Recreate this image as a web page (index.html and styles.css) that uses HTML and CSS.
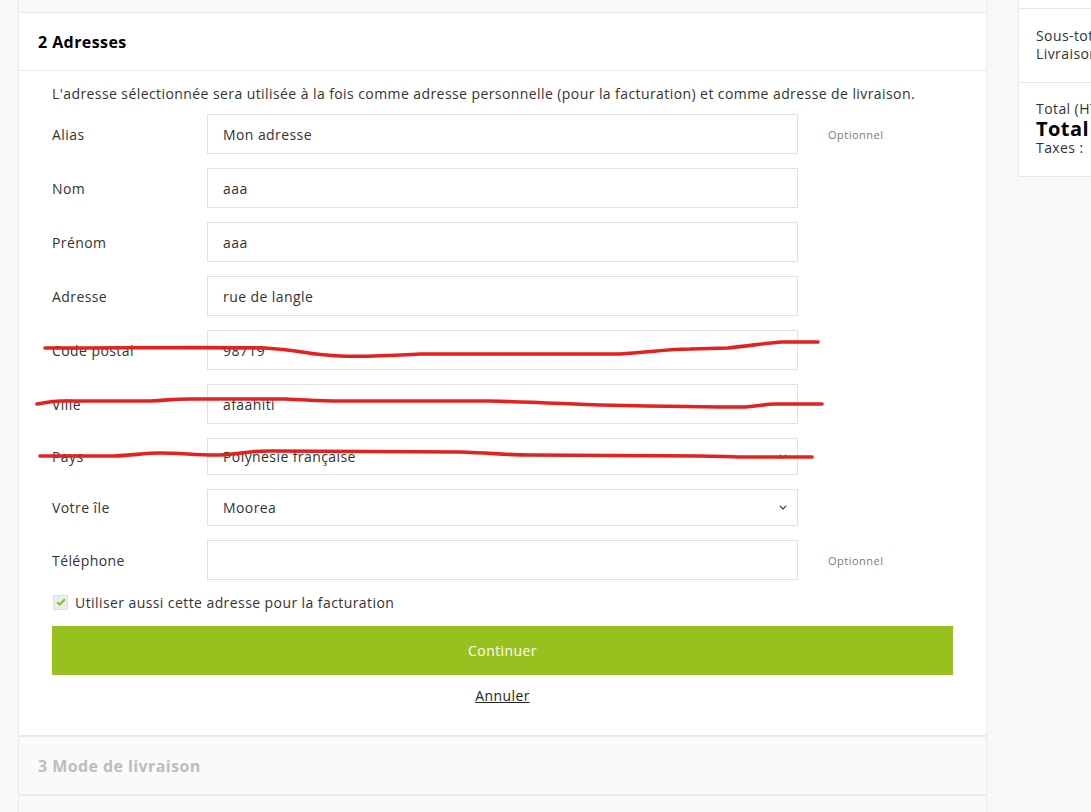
FILE: index.html
```html
<!DOCTYPE html>
<html lang="fr">
<head>
<meta charset="utf-8">
<title>Commande - Adresses</title>
<link rel="stylesheet" href="styles.css">
</head>
<body>
<div class="page">
  <div class="main">
    <section class="step step-done"></section>

    <section class="step step-current">
      <h1 class="step-title">2 Adresses</h1>
      <div class="step-body">
        <p class="intro">L'adresse sélectionnée sera utilisée à la fois comme adresse personnelle (pour la facturation) et comme adresse de livraison.</p>
        <form class="form">
          <div class="row">
            <label class="label">Alias</label>
            <input class="field" type="text" value="Mon adresse">
            <span class="opt">Optionnel</span>
          </div>
          <div class="row">
            <label class="label">Nom</label>
            <input class="field" type="text" value="aaa">
            <span class="opt"></span>
          </div>
          <div class="row">
            <label class="label">Prénom</label>
            <input class="field" type="text" value="aaa">
            <span class="opt"></span>
          </div>
          <div class="row">
            <label class="label">Adresse</label>
            <input class="field" type="text" value="rue de langle">
            <span class="opt"></span>
          </div>
          <div class="row">
            <label class="label">Code postal</label>
            <input class="field" type="text" value="98719">
            <span class="opt"></span>
          </div>
          <div class="row">
            <label class="label">Ville</label>
            <input class="field" type="text" value="afaahiti">
            <span class="opt"></span>
          </div>
          <div class="row">
            <label class="label">Pays</label>
            <div class="select-wrap">
              <select class="field select"><option>Polynésie française</option></select>
              <svg class="chev" width="8" height="5" viewBox="0 0 8 5"><path d="M0.8 0.8 L4 4 L7.2 0.8" fill="none" stroke="#555" stroke-width="1.3"/></svg>
            </div>
            <span class="opt"></span>
          </div>
          <div class="row">
            <label class="label">Votre île</label>
            <div class="select-wrap">
              <select class="field select"><option>Moorea</option></select>
              <svg class="chev" width="8" height="5" viewBox="0 0 8 5"><path d="M0.8 0.8 L4 4 L7.2 0.8" fill="none" stroke="#555" stroke-width="1.3"/></svg>
            </div>
            <span class="opt"></span>
          </div>
          <div class="row">
            <label class="label">Téléphone</label>
            <input class="field" type="text" value="">
            <span class="opt">Optionnel</span>
          </div>
          <div class="check-row">
            <span class="checkbox">
              <svg width="10" height="8" viewBox="0 0 10 8"><path d="M1.2 4.2 L3.8 6.6 L8.8 1.2" fill="none" stroke="#82bd2c" stroke-width="2"/></svg>
            </span>
            <span class="check-label">Utiliser aussi cette adresse pour la facturation</span>
          </div>
          <button class="btn" type="button">Continuer</button>
          <div class="cancel"><a href="#">Annuler</a></div>
        </form>
      </div>
    </section>

    <section class="step step-next">
      <h2 class="step-title muted">3 Mode de livraison</h2>
    </section>
    <section class="step step-next last"></section>
  </div>

  <aside class="aside">
    <div class="aside-top"></div>
    <div class="aside-block">
      <div class="line">Sous-total</div>
      <div class="line">Livraison</div>
    </div>
    <div class="aside-block totals">
      <div class="line">Total (HT)</div>
      <div class="line big">Total</div>
      <div class="line small">Taxes :</div>
    </div>
  </aside>
</div>

<svg class="scribbles" width="1091" height="812" viewBox="0 0 1091 812">
  <path d="M45 348 C120 348 200 347 265 348 C300 350 310 355 340 356 C370 357 400 355 420 354 L620 354 C650 352 670 349 690 349 L728 348 C750 346 765 343 782 342 L818 342" />
  <path d="M37 404 C45 403 50 401 60 401 L150 401 C170 400 175 399 190 399 L285 399 C310 400 320 401 340 401 L490 401 C530 402 570 404 600 405 C650 406 700 407 745 407 C760 406 765 404 775 404 L822 404" />
  <path d="M40 456 L115 456 C135 455 145 453 160 453 C180 453 195 455 215 455 C235 455 245 451 270 451 L460 452 C490 453 510 455 530 455 L700 456 C720 456 730 457 750 457 L812 457" />
</svg>
</body>
</html>
```
FILE: styles.css
```css
* { box-sizing: border-box; }
html, body {
  margin: 0;
  padding: 0;
}
body {
  width: 1091px;
  height: 812px;
  overflow: hidden;
  background: #f8f8f8;
  font-family: "Open Sans", "DejaVu Sans", sans-serif;
  font-size: 14px;
  letter-spacing: 0.42px;
  color: #232323;
  position: relative;
}
.page {
  display: flex;
  align-items: flex-start;
  gap: 31px;
  padding-left: 18px;
}
.main {
  width: 969px;
  flex: none;
}
.step {
  border: 1px solid #ebebeb;
  border-top: none;
}
.step-done {
  height: 13px;
  background: #fafafa;
}
.step-current {
  background: #fff;
  border-bottom: 2px solid #e9e9e9;
}
.step-title {
  margin: 0;
  height: 58px;
  display: flex;
  align-items: center;
  padding-left: 19px;
  font-size: 16px;
  font-weight: 700;
  color: #000;
  border-bottom: 1px solid #ebebeb;
}
.step-body {
  padding: 0 33px 29px;
}
.intro {
  margin: 13px 0 10px;
  line-height: 20px;
  color: #333;
}
.form {
  display: flex;
  flex-direction: column;
}
.row {
  display: grid;
  grid-template-columns: 155px 591px 1fr;
  align-items: center;
  margin-bottom: 14px;
}
.label {
  color: #333;
}
.field {
  width: 100%;
  height: 40px;
  border: 1px solid #e1e1e1;
  background: #fff;
  padding: 0 15px;
  font-family: inherit;
  font-size: 14px;
  letter-spacing: inherit;
  color: #333;
  outline: none;
}
.select-wrap {
  position: relative;
}
.select {
  height: 37px;
  appearance: none;
  -webkit-appearance: none;
  border-radius: 0;
}
.chev {
  position: absolute;
  right: 11px;
  top: 16px;
}
.opt {
  padding-left: 30px;
  font-size: 11px;
  letter-spacing: 0.5px;
  color: #7a7a7a;
}
.check-row {
  display: flex;
  align-items: center;
  height: 20px;
  margin-top: -2px;
  margin-bottom: 14px;
}
.checkbox {
  width: 15px;
  height: 15px;
  margin-left: 1px;
  margin-right: 7px;
  background: #ececec;
  border: 1px solid #e0e0e0;
  display: flex;
  align-items: center;
  justify-content: center;
}
.check-label {
  color: #333;
}
.btn {
  height: 49px;
  border: none;
  background: #97c11f;
  color: #fff;
  font-family: inherit;
  font-size: 14px;
  letter-spacing: inherit;
  cursor: pointer;
}
.cancel {
  text-align: center;
  margin-top: 11px;
  line-height: 20px;
}
.cancel a {
  color: #232323;
  text-decoration: underline;
}
.step-next {
  background: #fafafa;
  border-bottom: 2px solid #ececec;
}
.step-title.muted {
  border-bottom: none;
  height: 57px;
  color: #bdbdbd;
}
.step-next.last {
  height: 60px;
}

.aside {
  width: 300px;
  flex: none;
  background: #fff;
  border: 1px solid #e6e6e6;
  border-top: none;
}
.aside-top {
  height: 9px;
  border-bottom: 1px solid #e6e6e6;
}
.aside-block {
  padding: 18px 17px 19px;
  border-bottom: 1px solid #e6e6e6;
}
.aside-block:last-child {
  border-bottom: none;
}
.aside-block.totals {
  padding: 17px 17px 20px;
}
.line {
  line-height: 18px;
  color: #333;
  white-space: nowrap;
}
.line.big {
  font-size: 20px;
  font-weight: 700;
  line-height: 22px;
  color: #000;
}
.line.small {
  line-height: 16px;
}

.scribbles {
  position: absolute;
  left: 0;
  top: 0;
  pointer-events: none;
}
.scribbles path {
  fill: none;
  stroke: #e3211f;
  stroke-width: 3.6;
  stroke-linecap: round;
  stroke-linejoin: round;
}
```
